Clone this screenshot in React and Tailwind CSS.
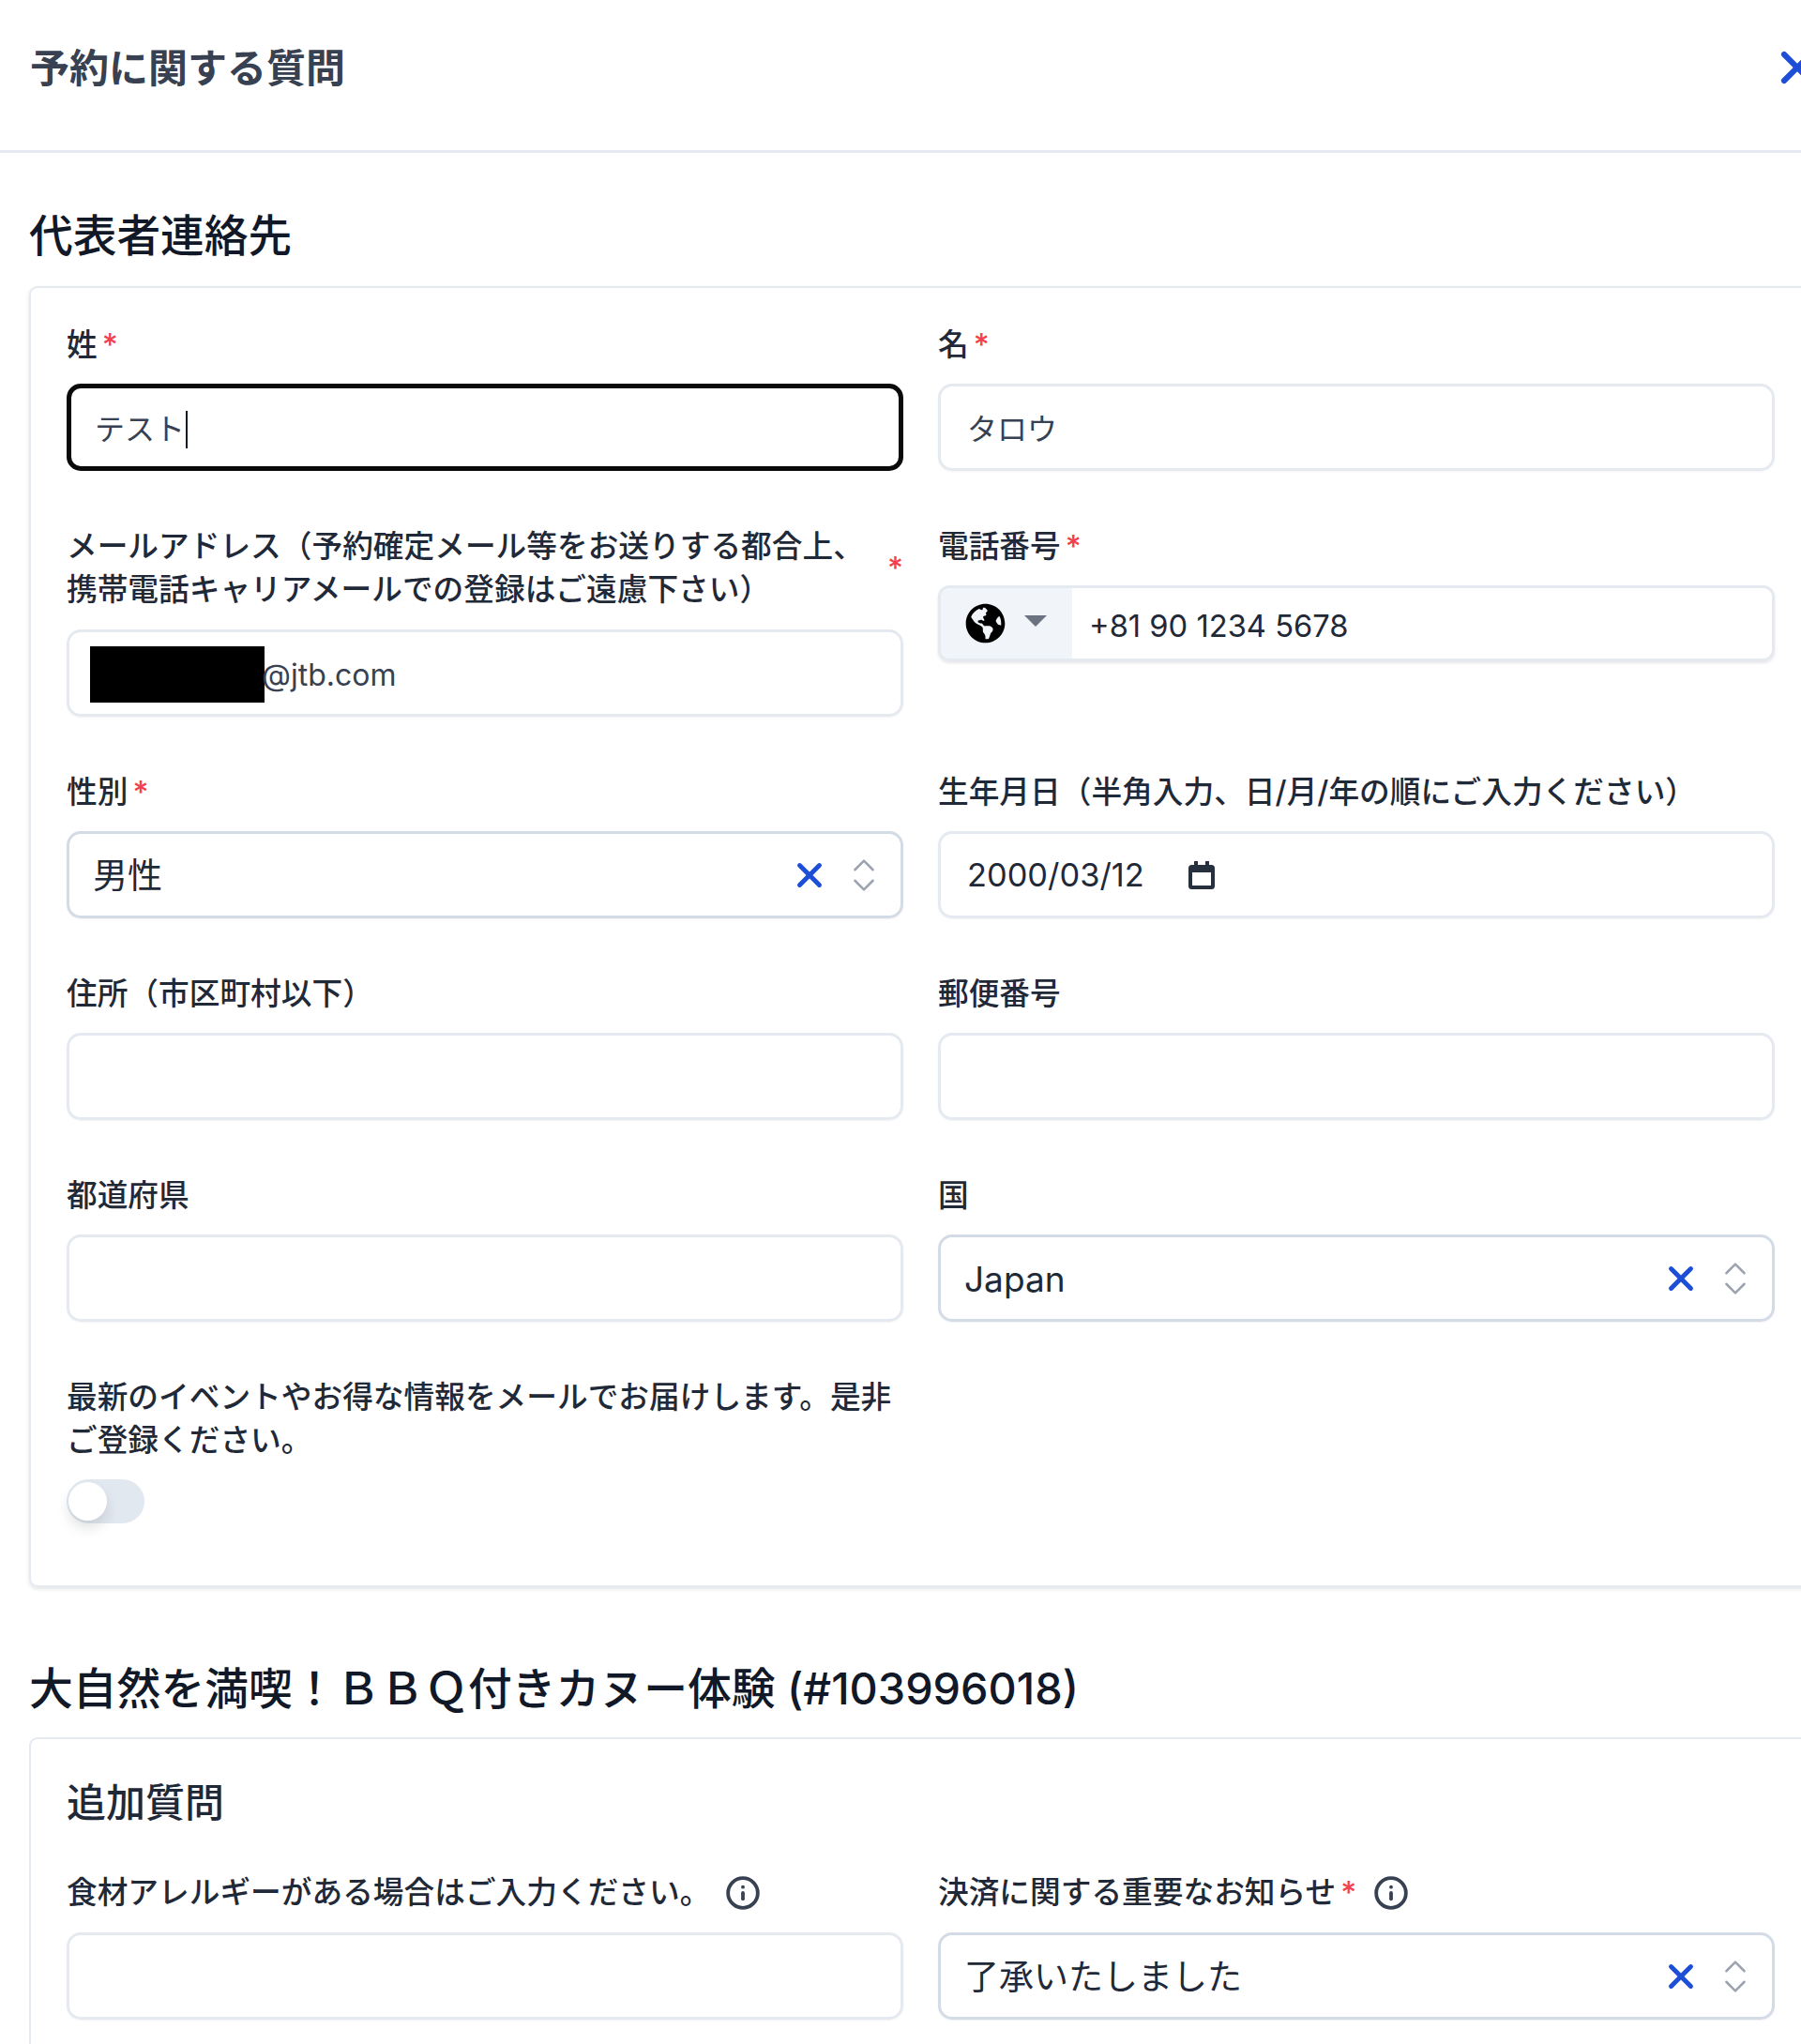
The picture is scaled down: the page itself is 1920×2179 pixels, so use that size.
import { X, ChevronsUpDown, Info } from 'lucide-react';
import { FaGlobeAmericas } from 'react-icons/fa';

const Req = () => <span className="ml-[5px] text-[#f43f4e]">*</span>;

function Label({ children, required }) {
  return (
    <div className="mb-[20px] h-[46px] whitespace-nowrap pt-[1px] text-[32.7px] leading-[46px] font-medium text-[#1f2937]">
      {children}
      {required && <Req />}
    </div>
  );
}

function TextBox({ children, focused }) {
  return (
    <div
      className={
        focused
          ? 'flex h-[93px] items-center rounded-[15px] border-[5px] border-[#0a0a0a] pt-[4px] pl-[25px] text-[32px] text-[#374151]'
          : 'flex h-[93px] items-center rounded-[15px] border-[3px] border-[#e5e9f0] pt-[4px] pl-[28px] text-[32px] text-[#374151] shadow-[0_1px_2px_rgba(15,23,42,0.05)]'
      }
    >
      {children}
    </div>
  );
}

function SelectBox({ value }) {
  return (
    <div className="flex h-[93px] items-center rounded-[15px] border-[3px] border-[#d3dbe6] pl-[25px] text-[37px] text-[#1f2937] shadow-[0_1px_2px_rgba(15,23,42,0.06)]">
      <span className="pt-[3px]">{value}</span>
      <X className="mr-[14px] ml-auto h-[42px] w-[42px] text-[#1d4ed8]" strokeWidth={2.8} />
      <ChevronsUpDown className="mr-[16px] h-[46px] w-[46px] text-[#9ca3af]" strokeWidth={1.3} />
    </div>
  );
}

function CalendarIcon() {
  return (
    <svg viewBox="0 0 28 30" className="mb-[4px] ml-[47px] h-[30px] w-[28px] text-[#27303f]" fill="currentColor">
      <path d="M6 0h4v4h8V0h4v4h2.5A3.5 3.5 0 0 1 28 7.5v19a3.5 3.5 0 0 1-3.5 3.5h-21A3.5 3.5 0 0 1 0 26.5v-19A3.5 3.5 0 0 1 3.5 4H6V0zM4 12v14h20V12H4z" />
    </svg>
  );
}

export default function App() {
  return (
    <div className="h-[2179px] w-full overflow-hidden bg-white font-['Inter','Noto_Sans_CJK_JP',sans-serif]">
      <header className="flex h-[163px] items-center justify-between border-b-[3px] border-[#e5e9f0] pb-[16px] pl-[32px]">
        <h1 className="text-[42px] font-semibold text-[#374151]">予約に関する質問</h1>
        <X className="mr-[-24px] h-[56px] w-[56px] text-[#1d4ed8]" strokeWidth={2.6} />
      </header>

      <main className="pl-[31px]">
        <h2 className="mt-[56px] mb-[22px] text-[46.7px] leading-[64px] font-medium text-[#111827]">代表者連絡先</h2>
        <section className="w-[1920px] rounded-[9px] border-2 border-[#e5e9f0] pt-[36px] pb-[66px] pl-[38px] shadow-[0_2px_4px_rgba(15,23,42,0.12)]">
          <div className="grid grid-cols-[892px_892px] items-start gap-x-[37px] gap-y-[56px]">
            <div>
              <Label required>姓</Label>
              <TextBox focused>
                テスト
                <span className="ml-[1px] h-[40px] w-[2px] bg-[#111827]" />
              </TextBox>
            </div>
            <div>
              <Label required>名</Label>
              <TextBox>タロウ</TextBox>
            </div>

            <div>
              <div className="mb-[20px] flex h-[93px] items-center justify-between text-[32.7px] leading-[46px] font-medium text-[#1f2937]">
                <div className="whitespace-nowrap">
                  メールアドレス（予約確定メール等をお送りする都合上、
                  <br />
                  携帯電話キャリアメールでの登録はご遠慮下さい）
                </div>
                <span className="text-[#f43f4e]">*</span>
              </div>
              <TextBox>
                <span className="mt-[-2px] ml-[-6px] h-[60px] w-[186px] bg-black" />
                <span className="ml-[-3px]">@jtb.com</span>
              </TextBox>
            </div>
            <div>
              <Label required>電話番号</Label>
              <div className="flex h-[81px] items-center overflow-hidden rounded-[12px] border-[3px] border-[#e5e9f0] text-[32.7px] text-[#1f2937] shadow-[0_2px_3px_rgba(15,23,42,0.1)]">
                <div className="flex h-full w-[140px] items-center bg-[#f1f4f9] pl-[26px]">
                  <FaGlobeAmericas className="h-[43px] w-[43px] text-black" />
                  <svg viewBox="0 0 24 12" className="mb-[6px] ml-[20px] h-[12px] w-[24px] text-[#6b7280]" fill="currentColor">
                    <path d="M0 0h24L12 12z" />
                  </svg>
                </div>
                <span className="pt-[7px] pl-[18px]">+81 90 1234 5678</span>
              </div>
            </div>

            <div>
              <Label required>性別</Label>
              <SelectBox value="男性" />
            </div>
            <div>
              <Label>生年月日（半角入力、日/月/年の順にご入力ください）</Label>
              <TextBox>
                <span className="mb-[4px] text-[34.4px] text-[#1f2937]">2000/03/12</span>
                <CalendarIcon />
              </TextBox>
            </div>

            <div>
              <Label>住所（市区町村以下）</Label>
              <TextBox />
            </div>
            <div>
              <Label>郵便番号</Label>
              <TextBox />
            </div>

            <div>
              <Label>都道府県</Label>
              <TextBox />
            </div>
            <div>
              <Label>国</Label>
              <SelectBox value="Japan" />
            </div>

            <div>
              <p className="mt-[1px] mb-[19px] text-[32.7px] leading-[46px] font-medium text-[#1f2937]">
                最新のイベントやお得な情報をメールでお届けします。是非ご登録ください。
              </p>
              <div className="flex h-[47px] w-[83px] items-center rounded-full bg-[#e2e8f0] pl-[2px]">
                <span className="h-[41px] w-[41px] rounded-full bg-white shadow-[0_8px_14px_rgba(15,23,42,0.12)]" />
              </div>
            </div>
          </div>
        </section>

        <h2 className="mt-[76px] mb-[20px] whitespace-nowrap text-[46.8px] leading-[64px] font-medium text-[#111827]">
          大自然を満喫！ＢＢＱ付きカヌー体験 (#103996018)
        </h2>
        <section className="w-[1920px] rounded-[9px] border-2 border-[#e5e9f0] pt-[37px] pb-[64px] pl-[38px]">
          <h3 className="mb-[42px] text-[42px] leading-[62px] font-medium text-[#1f2937]">追加質問</h3>
          <div className="grid grid-cols-[892px_892px] items-start gap-x-[37px]">
            <div>
              <div className="mb-[19px] flex h-[46px] items-center text-[32.7px] font-medium text-[#1f2937]">
                食材アレルギーがある場合はご入力ください。
                <Info className="ml-[16px] h-[38px] w-[38px] text-[#374151]" strokeWidth={2.4} />
              </div>
              <TextBox />
            </div>
            <div>
              <div className="mb-[19px] flex h-[46px] items-center text-[32.7px] font-medium text-[#1f2937]">
                決済に関する重要なお知らせ
                <Req />
                <Info className="ml-[18px] h-[38px] w-[38px] text-[#374151]" strokeWidth={2.4} />
              </div>
              <SelectBox value="了承いたしました" />
            </div>
          </div>
        </section>
      </main>
    </div>
  );
}
